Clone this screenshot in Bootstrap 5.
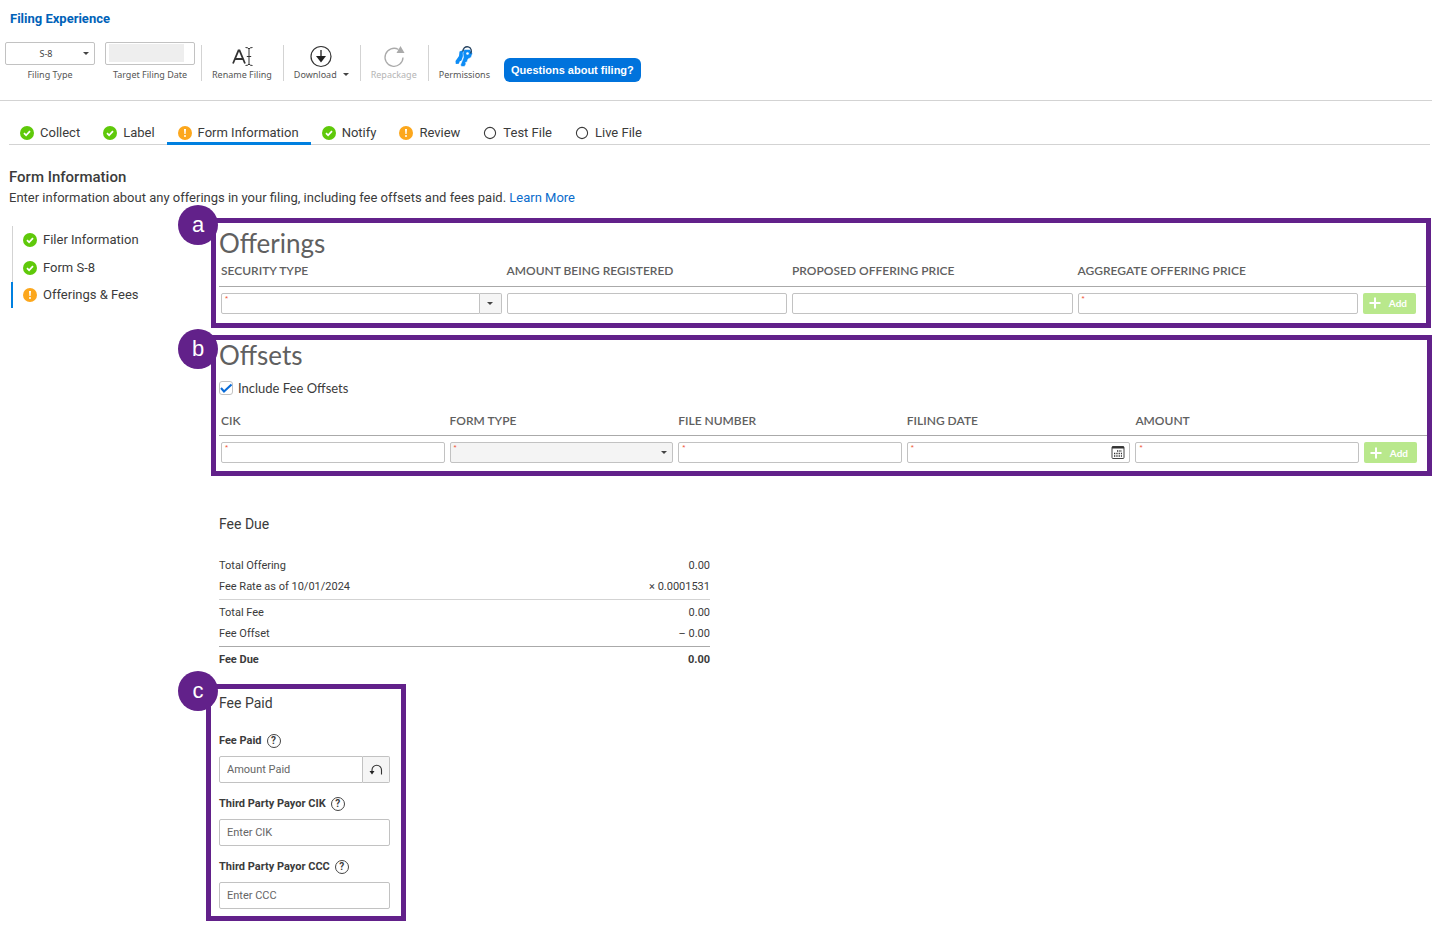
<!DOCTYPE html>
<html lang="en">
<head>
<meta charset="utf-8">
<meta name="viewport" content="width=device-width, initial-scale=1">
<title>Filing Experience</title>
<link href="https://cdn.jsdelivr.net/npm/bootstrap@5.3.0/dist/css/bootstrap.min.css" rel="stylesheet">
<style>
  :root { --purple: #62218a; --ink: #3b3b3b; --line: #d3d3d3; --edge: #c2c2c2; --blue: #0080e0; }
  body { font: 13px/20px Roboto, "Liberation Sans", sans-serif; color: var(--ink); background: #fff; }
  a { color: #0a6ccc; text-decoration: none; }
  svg { display: block; flex: none; }
  button { font: inherit; color: inherit; }

  .app-title { font-size: 13px; line-height: 18px; font-weight: 700; color: #0062b8; padding: 10px 10px 14px; margin: 0; }
  .toolbar { padding: 0 5px 18px; border-bottom: 1px solid var(--line); font: 9px/12px "Noto Sans", sans-serif; color: #555; }
  .tool-field { width: 90px; margin-right: 10px; text-align: center; }
  .tool-field + .tool-field { margin-right: 6px; }
  .tool-field select, .tool-field input { width: 100%; height: 23px; margin-bottom: 4px; border: 1px solid var(--edge); border-radius: 2px; font: inherit; color: #444; text-align: center; display: block; }
  .tool-field select { padding-right: 8px; }
  .plain-select { appearance: none; background: #fff url("data:image/svg+xml,%3Csvg xmlns='http://www.w3.org/2000/svg' viewBox='0 0 6 3'%3E%3Cpath d='M0 0h6L3 3z' fill='%23444'/%3E%3C/svg%3E") no-repeat right 5px center / 6px 3px; }
  .blank-date { background: linear-gradient(#eee, #eee) no-repeat 3px 1px / 75px 18px; }
  .tool { border: 0; border-left: 1px solid var(--line); background: none; padding: 0 11px 0 10px; height: 36px; margin-top: 3px; }
  .tool:disabled { color: #b5b5b5; }
  .tool svg { margin-bottom: 1px; }
  .with-caret { gap: 6px; }
  .ask { background: #0073dc; border: 0; border-radius: 6px; color: #fff; font: bold 11px/24px "Liberation Sans", sans-serif; padding: 0 7px; margin: 16px 0 0 3px; }

  .tabs { margin: 20px 2px 0 9px; border-bottom: 1px solid var(--line); }
  .tabs a { color: var(--ink); padding: 2px 12px 0 11px; height: 24px; gap: 6px; margin-bottom: -1px; border-bottom: 3px solid transparent; }
  .tabs a.active { border-color: var(--blue); }

  .intro { padding: 22px 9px 0; }
  .intro h1 { font-size: 15px; line-height: 20px; font-weight: 500; margin: 0; }
  .intro p { margin: 0; line-height: 22px; }

  .side { width: 194px; margin-left: 12px; padding-top: 17px; }
  .side a { color: var(--ink); height: 28px; padding-left: 10px; gap: 6px; border-left: 1px solid var(--line); }
  .side a.active { border-left: 2px solid var(--blue); margin-left: -1px; height: 26px; }

  main { min-width: 0; padding-top: 9px; }
  .callout { position: relative; border: 5px solid var(--purple); }
  .wide { margin: 0 0 7px 5px; padding-left: 3px; }
  .bubble { position: absolute; left: -38px; top: -18px; width: 40px; height: 40px; border-radius: 50%; background: var(--purple); color: #fff; font: 22px/40px "Liberation Sans", sans-serif; text-align: center; }
  .callout h2 { font: 26px/30px Lato, sans-serif; color: #606060; margin: 0; }
  .offer { padding-top: 5px; padding-bottom: 9px; margin-right: 1px; }
  .offset { padding-bottom: 8px; margin-bottom: 0; }
  .offset .bubble { top: -11px; }
  .paid .bubble { left: -33px; }

  .entry { width: 100%; table-layout: fixed; }
  .entry th { font: 600 12px/16px Lato, sans-serif; color: #606060; padding: 5px 3px 6px 2px; border-bottom: 1px solid #aaa; white-space: nowrap; height: 28px; }
  .entry td { padding: 6px 3px 0 2px; position: relative; vertical-align: top; }
  .entry th:last-child { width: 65px; }
  .req::before { content: "*"; position: absolute; z-index: 6; left: 6px; top: 7px; font: 8px/10px "Liberation Sans", sans-serif; color: #f0563a; }
  .box { width: 100%; height: 21px; border: 1px solid var(--edge); border-radius: 2px; background-color: #fff; padding: 0 6px; font: inherit; min-width: 0; display: block; }
  .box.shade { background-color: #f4f4f4; }
  .drop { width: 22px; border: 1px solid var(--edge); border-left: 0; border-radius: 0 2px 2px 0; background: #f5f5f5; flex: none; padding: 0; }
  .cal { position: absolute; right: 8px; top: 10px; border: 0; background: none; padding: 0; }
  .add { width: 53px; height: 21px; border: 0; border-radius: 2px; background: #b9e88c; color: #fff; font: bold 10px/18px Lato, sans-serif; padding: 0 9px 0 6px; }
  .check { gap: 5px; font: 13px/20px Lato, sans-serif; height: 38px; padding-bottom: 2px; }
  .check input { appearance: none; width: 14px; height: 14px; margin: 0; border: 1px solid var(--edge); border-radius: 3px; background: #fff; }
  .check input:checked { background: #fff url("data:image/svg+xml,%3Csvg xmlns='http://www.w3.org/2000/svg' viewBox='0 0 12 12'%3E%3Cpath d='M1 6l3 3.500 7.500-7' fill='none' stroke='%230a6cd8' stroke-width='2'/%3E%3C/svg%3E") center / 12px 12px no-repeat; }

  .sub { font-size: 14px; line-height: 20px; font-weight: 400; margin: 0; }
  .due { margin: 38px 0 0 13px; width: 491px; font-size: 11px; line-height: 21px; }
  .due table { width: 100%; margin: 21px 0 14px; }
  .due td, .due th { padding: 0; font-weight: 400; }
  .due .sum > * { border-top: 1px solid var(--line); padding-top: 2px; }
  .due .pre > * { padding-bottom: 2px; }
  .due .total > * { border-color: #aaa; font-weight: 700; }
  .paid { width: 200px; padding: 4px 11px 7px 8px; font-size: 11px; }
  .paid label { font-weight: 700; line-height: 16px; }
  .paid .caption { gap: 5px; height: 16px; margin: 20px 0 7px; }
  .paid .caption ~ .caption { margin-top: 13px; }
  .paid .box { height: 27px; padding: 0 7px; }
  .paid ::placeholder { color: #666; opacity: 1; }
  .paid .drop { width: 27px; }
  .help { width: 14px; height: 14px; border: 1px solid #444; border-radius: 50%; background: none; padding: 0; font: bold 10px/12px Roboto, sans-serif; }
</style>
</head>
<body>
<svg width="0" height="0" class="position-absolute" aria-hidden="true">
  <symbol id="ok" viewBox="0 0 14 14"><circle cx="7" cy="7" r="7" fill="#5fc90a"/><path d="M4 7.200l2.100 2.100L10 5.200" fill="none" stroke="#fff" stroke-width="1.800"/></symbol>
  <symbol id="warn" viewBox="0 0 14 14"><circle cx="7" cy="7" r="7" fill="#fca71c"/><path d="M6 3h2l-.4 5H6.400z" fill="#fff"/><circle cx="7" cy="10" r="1" fill="#fff"/></symbol>
  <symbol id="todo" viewBox="0 0 14 14"><circle cx="7" cy="7" r="5.600" fill="none" stroke="#3b3b3b" stroke-width="1.100"/></symbol>
  <symbol id="caret" viewBox="0 0 6 3"><path d="M0 0h6L3 3z" fill="#444"/></symbol>
  <symbol id="plus" viewBox="0 0 12 12"><path d="M6 .5v11M.5 6h11" stroke="#fff" stroke-width="2"/></symbol>
</svg>

<header>
  <p class="app-title">Filing Experience</p>
  <div class="toolbar d-flex align-items-start">
    <div class="tool-field">
      <select id="ftype" class="plain-select"><option>S-8</option></select>
      <label for="ftype" class="d-block">Filing Type</label>
    </div>
    <div class="tool-field">
      <input id="fdate" class="blank-date" type="text">
      <label for="fdate" class="d-block">Target Filing Date</label>
    </div>
    <button class="tool d-flex flex-column align-items-center" type="button">
      <svg width="22" height="23" viewBox="0 0 22 23" fill="none" stroke="#333"><path d="M2 18.500L7.500 5.500h1L14 18.500M4.200 14h7.600" stroke-width="1.800"/><path d="M14.500 2.500q3 0 3.500 1.500q.5-1.500 3.500-1.500M14.500 20.500q3 0 3.500-1.500q.5 1.500 3.500 1.500M18 4v15M15.800 11.500h4.400"/></svg>
      <span>Rename Filing</span>
    </button>
    <button class="tool d-flex flex-column align-items-center" type="button">
      <svg width="22" height="23" viewBox="0 0 22 23"><circle cx="11" cy="11.500" r="10" fill="none" stroke="#333" stroke-width="1.200"/><path d="M11 5v8" stroke="#333" stroke-width="1.400"/><path d="M6 11h10l-5 6.500z" fill="#222"/></svg>
      <span class="with-caret d-flex align-items-center">Download <svg width="6" height="3"><use href="#caret"/></svg></span>
    </button>
    <button class="tool d-flex flex-column align-items-center" type="button" disabled>
      <svg width="22" height="23" viewBox="0 0 22 23"><path d="M15.500 4.500A9 9 0 1 0 20 12.500" fill="none" stroke="#aaa" stroke-width="1.300"/><path d="M17.500 1l4 7h-8z" fill="#aaa"/></svg>
      <span>Repackage</span>
    </button>
    <button class="tool d-flex flex-column align-items-center" type="button">
      <svg width="22" height="23" viewBox="0 0 22 23"><path d="M12 4.500L6.500 6.500 6 11l-3.500 5 .3 3 3-.3 1-2.500 1.500-.5 1-2.500z" fill="#0d8cf5"/><path d="M11 4.500l6 0 2.500 4-1.500 4-3 1.500-1 3-1.500.5.500 1.500-1.500 2.500H8.500L7.500 20l3-7.500-.5-4z" fill="#0d8cf5" stroke="#fff" stroke-width=".5"/><circle cx="14.500" cy="8.500" r="1.300" fill="#fff"/><path d="M10 6.500a4.200 4.200 0 1 1 7.500 2" fill="none" stroke="#24415e" stroke-width="1.300"/></svg>
      <span>Permissions</span>
    </button>
    <button class="ask" type="button">Questions about filing?</button>
  </div>
</header>

<nav class="tabs d-flex">
  <a href="#" class="d-flex align-items-center"><svg width="14" height="14"><use href="#ok"/></svg>Collect</a>
  <a href="#" class="d-flex align-items-center"><svg width="14" height="14"><use href="#ok"/></svg>Label</a>
  <a href="#" class="d-flex align-items-center active"><svg width="14" height="14"><use href="#warn"/></svg>Form Information</a>
  <a href="#" class="d-flex align-items-center"><svg width="14" height="14"><use href="#ok"/></svg>Notify</a>
  <a href="#" class="d-flex align-items-center"><svg width="14" height="14"><use href="#warn"/></svg>Review</a>
  <a href="#" class="d-flex align-items-center"><svg width="14" height="14"><use href="#todo"/></svg>Test File</a>
  <a href="#" class="d-flex align-items-center"><svg width="14" height="14"><use href="#todo"/></svg>Live File</a>
</nav>

<div class="intro">
  <h1>Form Information</h1>
  <p>Enter information about any offerings in your filing, including fee offsets and fees paid. <a href="#">Learn More</a></p>
</div>

<div class="d-flex">
  <nav class="side flex-shrink-0">
    <a href="#" class="d-flex align-items-center"><svg width="14" height="14"><use href="#ok"/></svg>Filer Information</a>
    <a href="#" class="d-flex align-items-center"><svg width="14" height="14"><use href="#ok"/></svg>Form S-8</a>
    <a href="#" class="d-flex align-items-center active"><svg width="14" height="14"><use href="#warn"/></svg>Offerings &amp; Fees</a>
  </nav>

  <main class="flex-grow-1">
    <section class="callout wide offer">
      <span class="bubble">a</span>
      <h2>Offerings</h2>
      <table class="entry">
        <thead><tr><th>SECURITY TYPE</th><th>AMOUNT BEING REGISTERED</th><th>PROPOSED OFFERING PRICE</th><th>AGGREGATE OFFERING PRICE</th><th></th></tr></thead>
        <tbody><tr>
          <td class="req"><div class="d-flex"><input class="box rounded-end-0" type="text" aria-label="Security type"><button class="drop d-flex align-items-center justify-content-center" type="button" aria-label="Show security types"><svg width="6" height="3"><use href="#caret"/></svg></button></div></td>
          <td><input class="box" type="text" aria-label="Amount being registered"></td>
          <td><input class="box" type="text" aria-label="Proposed offering price"></td>
          <td class="req"><input class="box" type="text" aria-label="Aggregate offering price"></td>
          <td><button class="add d-flex justify-content-between align-items-center" type="button"><svg width="12" height="12"><use href="#plus"/></svg>Add</button></td>
        </tr></tbody>
      </table>
    </section>

    <section class="callout wide offset">
      <span class="bubble">b</span>
      <h2>Offsets</h2>
      <div class="check d-flex align-items-center"><input id="inc" type="checkbox" checked><label for="inc">Include Fee Offsets</label></div>
      <table class="entry">
        <thead><tr><th>CIK</th><th>FORM TYPE</th><th>FILE NUMBER</th><th>FILING DATE</th><th>AMOUNT</th><th></th></tr></thead>
        <tbody><tr>
          <td class="req"><input class="box" type="text" aria-label="CIK"></td>
          <td class="req"><select class="box plain-select shade" aria-label="Form type"><option></option></select></td>
          <td class="req"><input class="box" type="text" aria-label="File number"></td>
          <td class="req"><input class="box" type="text" aria-label="Filing date"><button class="cal" type="button" aria-label="Pick a date"><svg width="14" height="13" viewBox="0 0 14 13"><rect x="1" y=".5" width="12" height="12" rx="1" fill="#fff" stroke="#444"/><path d="M1 1.500h12" stroke="#333" stroke-width="2"/><path d="M6 5h5M3 7.500h8M3 10h8" stroke="#333" stroke-width="1.300" stroke-dasharray="1.300 1"/></svg></button></td>
          <td class="req"><input class="box" type="text" aria-label="Amount"></td>
          <td><button class="add d-flex justify-content-between align-items-center" type="button"><svg width="12" height="12"><use href="#plus"/></svg>Add</button></td>
        </tr></tbody>
      </table>
    </section>

    <section class="due">
      <h3 class="sub">Fee Due</h3>
      <table>
        <tbody>
          <tr><th scope="row">Total Offering</th><td class="text-end">0.00</td></tr>
          <tr class="pre"><th scope="row">Fee Rate as of 10/01/2024</th><td class="text-end">× 0.0001531</td></tr>
          <tr class="sum"><th scope="row">Total Fee</th><td class="text-end">0.00</td></tr>
          <tr class="pre"><th scope="row">Fee Offset</th><td class="text-end">– 0.00</td></tr>
          <tr class="sum total"><th scope="row">Fee Due</th><td class="text-end">0.00</td></tr>
        </tbody>
      </table>
    </section>

    <section class="callout paid">
      <span class="bubble">c</span>
      <h3 class="sub">Fee Paid</h3>
      <div class="caption d-flex align-items-center"><label for="paid">Fee Paid</label><button class="help" type="button">?</button></div>
      <div class="d-flex"><input id="paid" class="box rounded-end-0" type="text" placeholder="Amount Paid"><button class="drop d-flex align-items-center justify-content-center" type="button" aria-label="Reset amount"><svg width="14" height="12" viewBox="0 0 14 12"><path d="M3 8V6a4.500 4.500 0 0 1 9.500 0v4.500" fill="none" stroke="#333" stroke-width="1.100"/><path d="M.5 7h5L3 10.500z" fill="#222"/></svg></button></div>
      <div class="caption d-flex align-items-center"><label for="cik">Third Party Payor CIK</label><button class="help" type="button">?</button></div>
      <input id="cik" class="box" type="text" placeholder="Enter CIK">
      <div class="caption d-flex align-items-center"><label for="ccc">Third Party Payor CCC</label><button class="help" type="button">?</button></div>
      <input id="ccc" class="box" type="text" placeholder="Enter CCC">
    </section>
  </main>
</div>
<script src="https://cdn.jsdelivr.net/npm/bootstrap@5.3.0/dist/js/bootstrap.bundle.min.js"></script>
</body>
</html>
